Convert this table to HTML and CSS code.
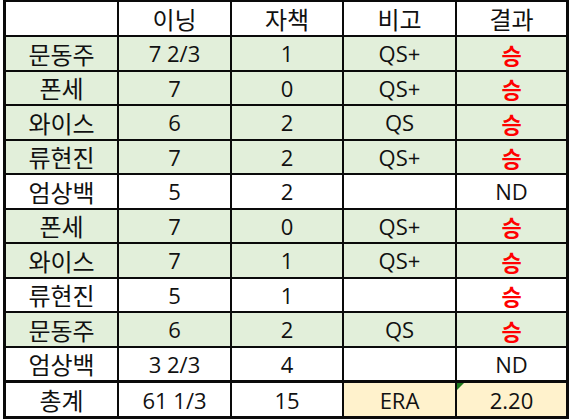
FILE: index.html
```html
<!DOCTYPE html>
<html lang="ko">
<head>
<meta charset="utf-8">
<link rel="stylesheet" href="styles.css">
</head>
<body>
<div class="sheet">
  <div class="c"></div><div class="c k">이닝</div><div class="c k">자책</div><div class="c k">비고</div><div class="c k">결과</div>

  <div class="c g k">문동주</div><div class="c g">7 2/3</div><div class="c g">1</div><div class="c g">QS+</div><div class="c g k win">승</div>
  <div class="c g k">폰세</div><div class="c g">7</div><div class="c g">0</div><div class="c g">QS+</div><div class="c g k win">승</div>
  <div class="c g k">와이스</div><div class="c g">6</div><div class="c g">2</div><div class="c g">QS</div><div class="c g k win">승</div>
  <div class="c g k">류현진</div><div class="c g">7</div><div class="c g">2</div><div class="c g">QS+</div><div class="c g k win">승</div>
  <div class="c k">엄상백</div><div class="c">5</div><div class="c">2</div><div class="c"></div><div class="c">ND</div>
  <div class="c g k">폰세</div><div class="c g">7</div><div class="c g">0</div><div class="c g">QS+</div><div class="c g k win">승</div>
  <div class="c g k">와이스</div><div class="c g">7</div><div class="c g">1</div><div class="c g">QS+</div><div class="c g k win">승</div>
  <div class="c k">류현진</div><div class="c">5</div><div class="c">1</div><div class="c"></div><div class="c k win">승</div>
  <div class="c g k">문동주</div><div class="c g">6</div><div class="c g">2</div><div class="c g">QS</div><div class="c g k win">승</div>
  <div class="c k">엄상백</div><div class="c">3 2/3</div><div class="c">4</div><div class="c"></div><div class="c">ND</div>

  <div class="c t k">총계</div><div class="c t">61 1/3</div><div class="c t">15</div><div class="c t y">ERA</div><div class="c t y flag">2.20</div>
</div>
</body>
</html>
```

FILE: styles.css
```css
html, body {
  margin: 0;
  padding: 0;
  background: #ffffff;
}
body {
  width: 570px;
  height: 420px;
  overflow: hidden;
}
.sheet {
  margin-left: 3px;
  width: 560px;
  display: grid;
  grid-template-columns: 111px 111px 110px 111px 109px;
  grid-template-rows: 33px repeat(10, 32.5px) 34px;
  gap: 2px;
  padding: 2px 3px 3px 3px;
  background: #0a0a0a;
  font-family: "Open Sans", "Noto Sans CJK KR", sans-serif;
  font-size: 22px;
  color: #111111;
}
.c {
  background: #ffffff;
  display: flex;
  align-items: center;
  justify-content: center;
  line-height: 1;
  white-space: pre;
}
.k {
  font-family: "Noto Sans CJK KR", sans-serif;
  font-size: 24px;
  padding-top: 1px;
}
.g {
  background: #e2efda;
}
.win {
  color: #ff0000;
  font-weight: 700;
  font-size: 22px;
}
.t {
  margin-top: 1px;
}
.y {
  background: #fff2cc;
}
.flag {
  position: relative;
}
.flag::before {
  content: "";
  position: absolute;
  left: 0;
  top: 0;
  border-top: 7px solid #1e7b1e;
  border-right: 7px solid transparent;
}
```
